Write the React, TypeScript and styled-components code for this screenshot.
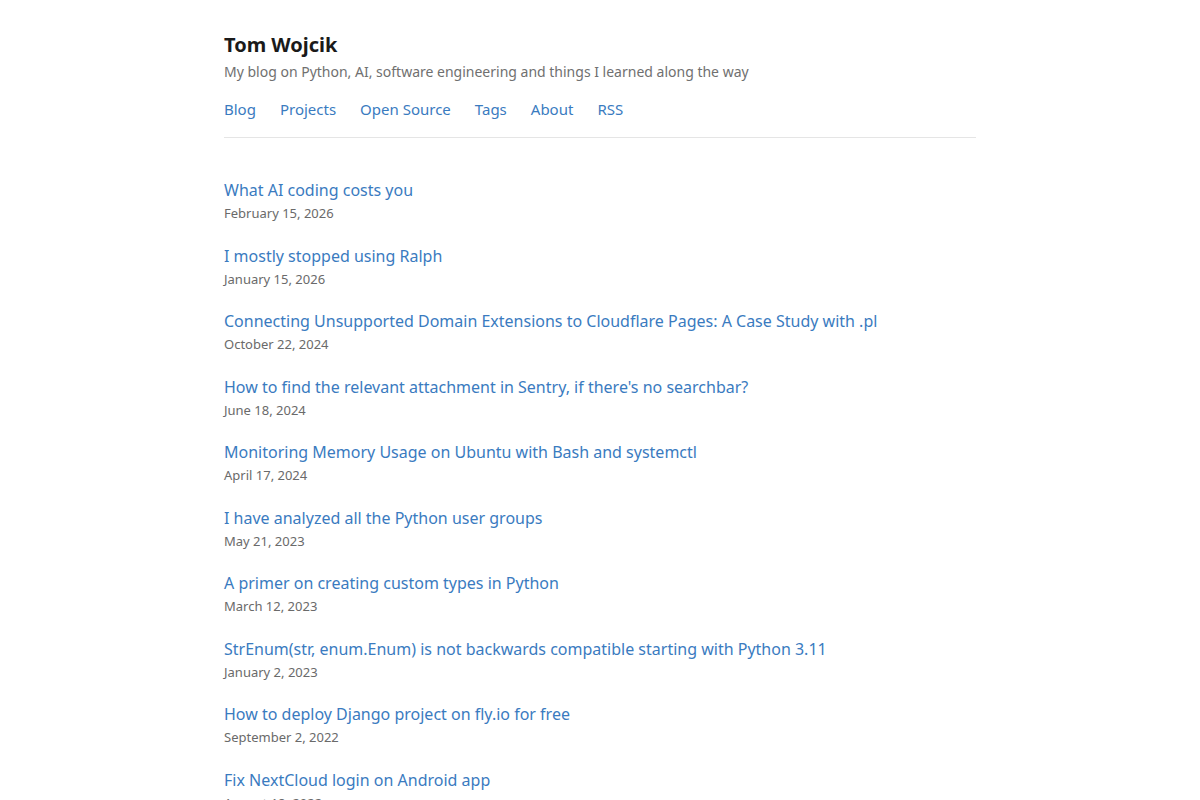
import styled, { createGlobalStyle } from "styled-components";

const GlobalStyle = createGlobalStyle`
  body {
    margin: 0;
    background: #fff;
    font-family: "Noto Sans", "Open Sans", sans-serif;
  }
`;

const posts = [
  { title: "What AI coding costs you", date: "February 15, 2026" },
  { title: "I mostly stopped using Ralph", date: "January 15, 2026" },
  {
    title:
      "Connecting Unsupported Domain Extensions to Cloudflare Pages: A Case Study with .pl",
    date: "October 22, 2024",
  },
  {
    title: "How to find the relevant attachment in Sentry, if there's no searchbar?",
    date: "June 18, 2024",
  },
  {
    title: "Monitoring Memory Usage on Ubuntu with Bash and systemctl",
    date: "April 17, 2024",
  },
  { title: "I have analyzed all the Python user groups", date: "May 21, 2023" },
  { title: "A primer on creating custom types in Python", date: "March 12, 2023" },
  {
    title:
      "StrEnum(str, enum.Enum) is not backwards compatible starting with Python 3.11",
    date: "January 2, 2023",
  },
  { title: "How to deploy Django project on fly.io for free", date: "September 2, 2022" },
  { title: "Fix NextCloud login on Android app", date: "August 18, 2022" },
];

const navItems = ["Blog", "Projects", "Open Source", "Tags", "About", "RSS"];

export default function App() {
  return (
    <>
      <GlobalStyle />
      <Page>
        <Header>
          <SiteTitle>Tom Wojcik</SiteTitle>
          <Tagline>
            My blog on Python, AI, software engineering and things I learned along the way
          </Tagline>
          <Nav>
            {navItems.map((item) => (
              <NavLink key={item} href="#">
                {item}
              </NavLink>
            ))}
          </Nav>
        </Header>
        <PostList>
          {posts.map((post) => (
            <PostItem key={post.title}>
              <PostLink href="#">{post.title}</PostLink>
              <PostDate>{post.date}</PostDate>
            </PostItem>
          ))}
        </PostList>
      </Page>
    </>
  );
}

const Page = styled.div`
  max-width: 752px;
  margin: 0 auto;
  padding-top: 30px;
`;

const Header = styled.header`
  padding-bottom: 17.5px;
  border-bottom: 1px solid #e5e5e5;
`;

const SiteTitle = styled.h1`
  margin: 0;
  font-size: 20px;
  font-weight: 700;
  line-height: 30px;
  color: #1a1a1a;
`;

const Tagline = styled.p`
  margin: 1px 0 0;
  font-size: 14px;
  line-height: 22px;
  color: #707070;
`;

const Nav = styled.nav`
  display: flex;
  gap: 24px;
  margin-top: 14.5px;
`;

const NavLink = styled.a`
  font-size: 15px;
  line-height: 22px;
  color: #3a7bbf;
  text-decoration: none;
`;

const PostList = styled.ul`
  list-style: none;
  margin: 0;
  padding: 40px 0 0;
  display: flex;
  flex-direction: column;
  gap: 19.5px;
`;

const PostItem = styled.li`
  display: flex;
  flex-direction: column;
`;

const PostLink = styled.a`
  font-size: 16px;
  line-height: 24px;
  color: #3a7bbf;
  text-decoration: none;
`;

const PostDate = styled.span`
  font-size: 13px;
  line-height: 22px;
  color: #6a6a6a;
`;
